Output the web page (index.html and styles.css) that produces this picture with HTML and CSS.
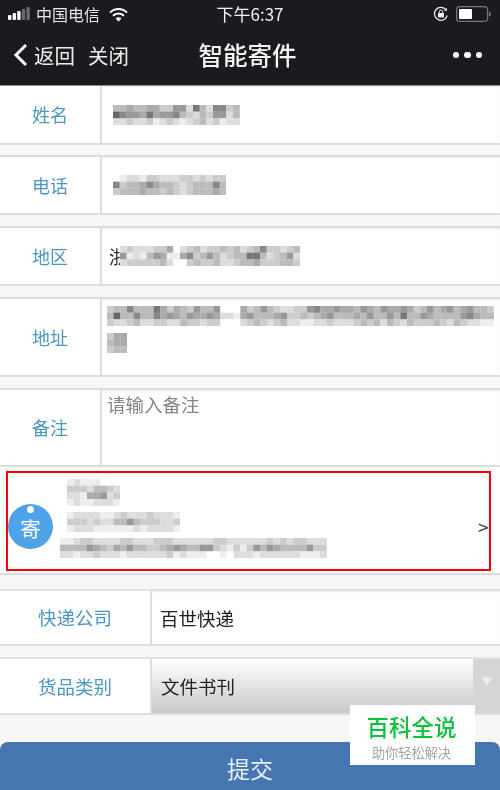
FILE: index.html
```html
<!DOCTYPE html>
<html lang="zh-CN">
<head>
<meta charset="utf-8">
<title>智能寄件</title>
<link rel="stylesheet" href="styles.css">
</head>
<body>
<div class="page">
  <header class="top">
    <div class="status">
      <div class="status-left">
        <svg class="signal" width="22" height="14" viewBox="0 0 22 14"><rect x="0" y="8" width="3.4" height="5" rx="1" fill="#fff"/><rect x="4.6" y="6" width="3.4" height="7" rx="1" fill="#fff"/><rect x="9.2" y="4" width="3.4" height="9" rx="1" fill="#fff"/><rect x="13.8" y="2" width="3.4" height="11" rx="1" fill="#6a6a6c"/><rect x="18.4" y="0" width="3.4" height="13" rx="1" fill="#6a6a6c"/></svg>
        <span class="carrier">中国电信</span>
        <svg class="wifi" width="19" height="14" viewBox="0 0 19 14"><path d="M1 4.6a12 12 0 0 1 17 0" fill="none" stroke="#fff" stroke-width="2"/><path d="M4 7.8a7.8 7.8 0 0 1 11 0" fill="none" stroke="#fff" stroke-width="2"/><path d="M9.5 13.5 6.6 10.6a4.1 4.1 0 0 1 5.8 0z" fill="#fff"/></svg>
      </div>
      <span class="clock">下午6:37</span>
      <div class="status-right">
        <svg width="16" height="16" viewBox="0 0 16 16"><path d="M14.2 9.5A6.5 6.5 0 1 1 13.2 4" fill="none" stroke="#eee" stroke-width="1.2"/><path d="M13.9 1.8v3h-3z" fill="#eee"/><rect x="5" y="7" width="6" height="4.6" rx=".6" fill="#eee"/><path d="M6.3 7V5.8a1.7 1.7 0 0 1 3.4 0V7" fill="none" stroke="#eee" stroke-width="1"/></svg>
        <svg width="36" height="16" viewBox="0 0 36 16"><rect x=".6" y=".6" width="31" height="14.8" rx="3.2" fill="none" stroke="#77777a" stroke-width="1.2"/><rect x="3" y="3" width="13" height="10" rx="1" fill="#fff"/><path d="M33 5.5c1.4.4 1.8 1.4 1.8 2.5s-.4 2.1-1.8 2.5z" fill="#77777a"/></svg>
      </div>
    </div>
    <nav class="nav">
      <div class="nav-left">
        <svg class="back" width="15" height="24" viewBox="0 0 15 24"><path d="M13 2 3 12l10 10" fill="none" stroke="#fff" stroke-width="3"/></svg>
        <span class="nav-link">返回</span>
        <span class="nav-link nav-close">关闭</span>
      </div>
      <h1 class="title">智能寄件</h1>
      <div class="dots"><i></i><i></i><i></i></div>
    </nav>
  </header>

  <main class="form">
    <div class="row r-name">
      <div class="label">姓名</div>
      <div class="field"><svg class="mosaic" data-rows="bbabbaacc99d7bd88cb 6899a7a998bcdbc99db ddcddcedcdedcbdcedd"></svg></div>
    </div>
    <div class="row r-phone">
      <div class="label">电话</div>
      <div class="field"><svg class="mosaic" data-rows="feddeccdddccdcdcc 8cbba8abbcdcbbb8b cbbbabbcbcdcbbbab"></svg></div>
    </div>
    <div class="row r-area">
      <div class="label">地区</div>
      <div class="field field-area">
        <span class="value area-char">浙</span>
        <svg class="mosaic mosaic-over" data-rows="dcdddccafdcbdccbcbdcb8ccdcb 9edeb9aeea8cb9bdcbb77bdcb9d dcccccbdffcbccbddcbbacccbbc"></svg>
      </div>
    </div>
    <div class="row r-addr">
      <div class="label">地址</div>
      <div class="field field-addr">
        <svg class="mosaic" data-rows="cbb8bbb7acabc9bb9fffacb9bcddcc98aa9aab9ab9aa9acb9ba9ba9bbc b6bb8bb8a9ab9aa9addea9bbba9ccbcba9bbbab9bb9b7bb9abbbb98abb cddcbddccddbccdccfffdcbcdcbddeeddcdddcbcbdbcdbcccbcdbcddee"></svg>
        <svg class="mosaic addr-line" data-rows="caa baa cbb"></svg>
      </div>
    </div>
    <div class="row r-note">
      <div class="label">备注</div>
      <div class="field field-note"><span class="placeholder">请输入备注</span></div>
    </div>

    <section class="sender">
      <div class="badge"><i class="badge-hole"></i><span>寄</span></div>
      <div class="sender-lines">
        <svg class="mosaic m-a" data-rows="edeeefff cccdbbcd ddeaa9dc edeeddde"></svg>
        <svg class="mosaic m-b" data-rows="eddddeedcdddcddde cccdcddbb9bcccddc edddeeeeeededddde"></svg>
        <svg class="mosaic m-c" data-rows="eedccddddccdddcccddddddccddddddcdcdccddd bbbb9abcab9bbccba9abb99cdecec9b9abbbb9cc ddeddcdddeddddddcedeeeffefdddeddddddeeed"></svg>
      </div>
      <span class="more">&gt;</span>
      <div class="annotation"></div>
    </section>

    <div class="row wide r-company">
      <div class="label">快递公司</div>
      <div class="field"><span class="value">百世快递</span></div>
    </div>
    <div class="row wide r-type">
      <div class="label">货品类别</div>
      <div class="select"><span class="value">文件书刊</span></div>
      <div class="select-arrow"><svg width="12" height="9" viewBox="0 0 12 9"><path d="M.5.5h11L6 8.5z" fill="#eeeeee"/></svg></div>
    </div>
    <button class="submit" type="button">提交</button>
  </main>

  <aside class="mark">
    <div class="mark-name">百科全说</div>
    <div class="mark-sub">助你轻松解决</div>
  </aside>
</div>
<script src="mosaic.js"></script>
</body>
</html>
```
FILE: styles.css
```css
* { box-sizing: border-box; }
html, body { margin: 0; padding: 0; }
body { font-family: "Noto Sans CJK SC", "Noto Sans", sans-serif; background: #f7f7f7; }
.page { position: relative; width: 500px; height: 790px; overflow: hidden; background: #f7f7f7; filter: blur(.35px); }

.top { height: 86px; background: #1b1b1f; color: #fff; border-bottom: 1px solid #8d8d8d; }
.status { display: grid; grid-template-columns: 1fr auto 1fr; align-items: center; height: 28px; padding: 0 8px 0 8px; }
.status-left { display: flex; align-items: center; }
.signal { margin-right: 6px; }
.carrier { font-size: 16px; line-height: 20px; color: #e6e6e6; }
.wifi { margin: 1px 0 0 9px; }
.clock { font-size: 17px; line-height: 20px; color: #f0f0f0; font-family: "Noto Sans CJK SC", sans-serif; }
.status-right { display: flex; align-items: center; justify-content: flex-end; gap: 7px; }

.nav { display: grid; grid-template-columns: 1fr auto 1fr; align-items: center; height: 57px; padding: 0 18px 3px 13px; }
.nav-left { display: flex; align-items: center; }
.back { margin-right: 6px; }
.nav-link { font-size: 20.5px; line-height: 28px; color: #ececec; }
.nav-close { margin-left: 13px; }
.title { margin: 0; font-size: 24.5px; line-height: 32px; font-weight: 500; color: #f5f5f5; }
.dots { display: flex; justify-content: flex-end; gap: 5px; }
.dots i { width: 6.5px; height: 6.5px; border-radius: 50%; background: #fff; }

.form { display: flex; flex-direction: column; }
.row { display: flex; background: #fff; border-bottom: 2px solid #dedede; }
.r-name { height: 59px; margin-bottom: 10px; }
.r-phone { height: 60px; margin-bottom: 11px; border-top: 2px solid #dcdcdc; }
.r-area { height: 60px; margin-bottom: 11px; border-top: 2px solid #dcdcdc; }
.r-addr { height: 80px; margin-bottom: 11px; border-top: 2px solid #dcdcdc; }
.r-note { height: 79px; border-top: 2px solid #dcdcdc; }
.r-company { height: 57px; margin-top: 14px; margin-bottom: 11px; border-top: 2px solid #e2e2e2; }
.r-type { height: 58px; border-top: 2px solid #e2e2e2; }

.label { flex: none; width: 102px; display: flex; align-items: center; justify-content: center; padding-bottom: 1px; font-size: 18px; color: #4a97c0; border-right: 2px solid #dddddd; }
.wide .label { width: 152px; font-size: 18.5px; }
.field { position: relative; flex: 1; display: flex; align-items: center; padding-left: 11px; box-shadow: inset 0 2px 2px -1px #eaeaea; }
.value { font-size: 18.5px; line-height: 24px; color: #222; }
.wide .value { margin-left: -3px; }

.mosaic { display: block; background: #fff; filter: blur(.6px); }
.field-area { padding-left: 7px; }
.area-char { color: #333; }
.mosaic-over { position: absolute; left: 18px; top: 18px; }
.field-addr { flex-direction: column; align-items: flex-start; justify-content: flex-start; padding: 7px 0 0 5px; gap: 7px; }
.field-note { align-items: flex-start; padding: 1px 0 0 5px; }
.placeholder { font-size: 18.5px; line-height: 26px; color: #858585; }

.sender { position: relative; height: 108px; display: flex; align-items: center; background: #fff; border-bottom: 2px solid #dedede; }
.badge { position: relative; flex: none; width: 45px; height: 45px; margin: 13px 0 0 8px; padding-top: 3px; border-radius: 50%; background: #4fa3e8; color: #fff; display: flex; align-items: center; justify-content: center; font-size: 20.5px; }
.badge-hole { position: absolute; top: 2px; left: 19px; width: 7px; height: 7px; border-radius: 50%; background: #fff; }
.sender-lines { flex: 1; display: flex; flex-direction: column; gap: 6px; padding: 12px 0 0 14px; align-self: flex-start; }
.m-c { margin-left: -7px; }
.more { flex: none; width: 22px; font-size: 19px; line-height: 20px; color: #444; margin: 14px 0 0 -1px; }
.annotation { position: absolute; left: 6px; top: 4px; width: 485px; height: 100px; border: 2px solid #f00; }

.select { flex: 1; display: flex; align-items: center; padding-left: 12px; background: linear-gradient(#ffffff, #c9c9c9); }
.select-arrow { flex: none; width: 27px; display: flex; justify-content: center; padding-top: 18px; background: #d6d6d6; }

.submit { display: block; width: 500px; height: 60px; margin-top: 27px; padding: 0 0 8px; border: 0; border-radius: 8px 8px 0 0; background: #4676b0; color: #e9eff6; font-family: inherit; font-size: 23px; line-height: 30px; }

.mark { position: absolute; left: 350px; top: 705px; width: 125px; height: 60px; background: #fff; display: flex; flex-direction: column; align-items: center; padding: 4.5px 2px 0 0; }
.mark-name { font-size: 22.5px; line-height: 33px; font-weight: 500; color: #0cc23c; }
.mark-sub { font-size: 13.2px; line-height: 18px; margin-top: 1px; color: #a6a6a6; }
```
FILE: mosaic.js
```js
// Draws the pixelated (redacted) text blocks from rows of grey levels, one hex digit per cell.
var CELL = 20 / 3;
document.querySelectorAll('.mosaic').forEach(function (svg) {
  var rows = svg.dataset.rows.split(' ');
  var cols = rows[0].length;
  var w = cols * CELL, h = rows.length * CELL;
  svg.setAttribute('width', w);
  svg.setAttribute('height', h);
  svg.setAttribute('viewBox', '0 0 ' + w + ' ' + h);
  rows.forEach(function (row, y) {
    row.split('').forEach(function (c, x) {
      var v = parseInt(c, 16) * 17;
      var r = document.createElementNS('http://www.w3.org/2000/svg', 'rect');
      r.setAttribute('x', x * CELL);
      r.setAttribute('y', y * CELL);
      r.setAttribute('width', CELL + 0.2);
      r.setAttribute('height', CELL + 0.2);
      r.setAttribute('fill', 'rgb(' + v + ',' + v + ',' + v + ')');
      svg.appendChild(r);
    });
  });
});
```
